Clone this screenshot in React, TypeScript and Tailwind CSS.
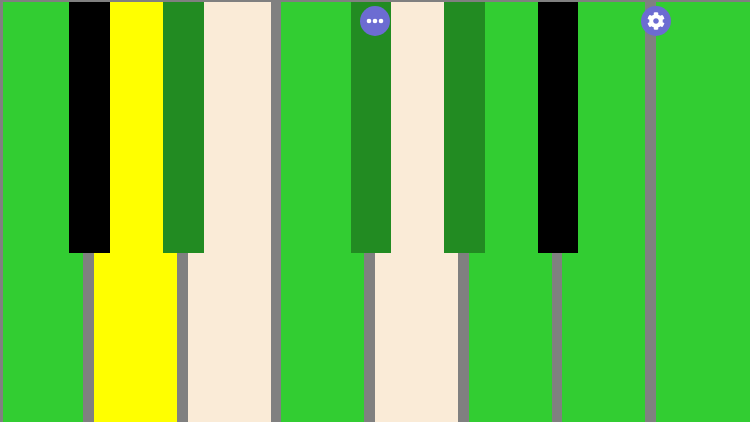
import { FaCog } from "react-icons/fa";

const whiteKeys = [
  "w-[80.35px] bg-[#32cd32]",
  "w-[83px] bg-[#ffff00]",
  "w-[83px] bg-[#faebd7]",
  "w-[83px] bg-[#32cd32]",
  "w-[83px] bg-[#faebd7]",
  "w-[83px] bg-[#32cd32]",
  "w-[83px] bg-[#32cd32]",
  "flex-1 bg-[#32cd32]",
];

const blackKeys = [
  "left-[69.4px] bg-black",
  "left-[163.1px] bg-[#228b22]",
  "left-[350.6px] bg-[#228b22]",
  "left-[444.3px] bg-[#228b22]",
  "left-[537.9px] bg-black",
];

export default function App() {
  return (
    <div className="relative flex h-[422px] w-[750px] gap-[10.65px] overflow-hidden bg-[#808080] pl-[3px] pt-[2px]">
      {/* White keys */}
      {whiteKeys.map((key, i) => (
        <div key={i} className={`h-full ${key}`} />
      ))}

      {/* Black keys */}
      {blackKeys.map((key, i) => (
        <div key={i} className={`absolute top-[2px] h-[251px] w-[40.5px] ${key}`} />
      ))}

      {/* Floating buttons */}
      <button className="absolute left-[360px] top-[6px] flex h-[30px] w-[30px] items-center justify-center rounded-full bg-[#6c6cd2]">
        <svg width="18" height="6" viewBox="0 0 18 6" fill="white">
          <circle cx="3" cy="3" r="2.3" />
          <circle cx="9" cy="3" r="2.3" />
          <circle cx="15" cy="3" r="2.3" />
        </svg>
      </button>
      <button className="absolute left-[641px] top-[6px] flex h-[30px] w-[30px] items-center justify-center rounded-full bg-[#6c6cd2] text-white">
        <FaCog className="h-[18px] w-[18px]" />
      </button>
    </div>
  );
}
